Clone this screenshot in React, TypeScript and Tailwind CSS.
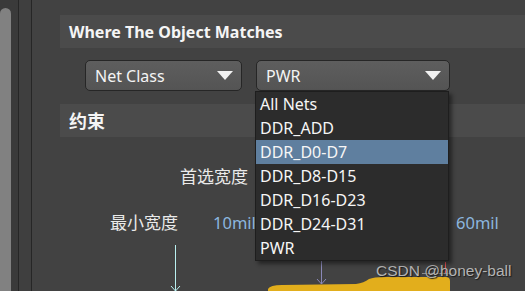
import React from 'react';

const NETS = ['All Nets', 'DDR_ADD', 'DDR_D0-D7', 'DDR_D8-D15', 'DDR_D16-D23', 'DDR_D24-D31', 'PWR'];

function Caret() {
    return (
        <svg width="16" height="9" viewBox="0 0 16 9" className="shrink-0">
            <path d="M0 0 H16 L8 9 Z" fill="#f2f2f2" />
        </svg>
    );
}

function Select({ value, className }: { value: string; className: string }) {
    return (
        <div
            className={`h-[31px] flex items-center justify-between pl-[9px] pr-[8px] rounded-[5px] border border-[#262626] bg-gradient-to-b from-[#5e5e5e] to-[#545454] text-[#f4f4f4] ${className}`}
        >
            <span>{value}</span>
            <Caret />
        </div>
    );
}

export default function App() {
    return (
        <div
            className="w-[525px] h-[291px] overflow-hidden flex bg-[#424242] text-[16px] leading-none"
            style={{ fontFamily: '"Noto Sans", "Noto Sans CJK SC", sans-serif' }}
        >
            {/* left gutters */}
            <div className="w-[11px] shrink-0 bg-[#3a3a3a] pt-[8px]">
                <div className="h-full bg-[#818181] rounded-t-[6px]" />
            </div>
            <div className="w-[8px] shrink-0 bg-[#3a3a3a] border-r border-[#262626]" />
            <div className="w-[13px] shrink-0 bg-[#3f3f3f] border-r border-[#262626]" />
            <div className="w-[28px] shrink-0" />

            <div className="flex-1 relative pt-[15px]">
                <div className="h-[33px] bg-[#4b4b4b] flex items-center pl-[9px] font-bold text-[#f5f5f5] text-[16px]">
                    Where The Object Matches
                </div>

                <div className="flex gap-[14px] pl-[25px] mt-[12px]">
                    <Select value="Net Class" className="w-[157px]" />
                    <Select value="PWR" className="w-[194px]" />
                </div>

                <div className="h-[33px] bg-[#4b4b4b] flex items-center pl-[9px] mt-[13px] text-[#f5f5f5] text-[18px] font-bold">
                    约束
                </div>

                {/* constraint diagram */}
                <div className="relative h-[154px] text-[17px] text-[#eaeaea]">
                    <div className="absolute left-[120px] top-[31px]">首选宽度</div>
                    <div className="absolute left-[50px] top-[77px]">最小宽度</div>
                    <div className="absolute left-[153px] top-[78px] text-[16.5px] text-[#8cb6df]">10mil</div>
                    <div className="absolute left-[396px] top-[78px] text-[16.5px] text-[#8cb6df]">60mil</div>

                    <svg className="absolute left-0 top-0" width="465" height="154" viewBox="0 0 465 154">
                        <line x1="115.5" y1="108" x2="115.5" y2="154" stroke="#b9f0f0" strokeWidth="1" />
                        <path d="M111 149 L115.5 154 L120 149" fill="none" stroke="#b9f0f0" strokeWidth="1" />
                        <line x1="261.5" y1="124" x2="261.5" y2="147" stroke="#8a88b8" strokeWidth="1" />
                        <path d="M257 142 L261.5 147 L266 142" fill="none" stroke="#8a88b8" strokeWidth="1" />
                        <line x1="385.5" y1="125" x2="385.5" y2="136" stroke="#e05050" strokeWidth="1" />
                        <line x1="362" y1="136.5" x2="392" y2="136.5" stroke="#8a8a8a" strokeWidth="1" />
                        <path d="M208 154 L208 152 Q210 148 222 148 L296 147 Q304 146 309 142 Q314 140 324 140 L386 140 Q390 140 390 144 L390 154 Z" fill="#e2ae1c" />
                    </svg>

                    <div
                        className="absolute left-[316px] top-[126px] text-[15.5px] text-[#b4b4b4] [text-shadow:1px_1px_1px_#1a1a1a]"
                        style={{ fontFamily: '"Liberation Sans", sans-serif' }}
                    >
                        CSDN @honey-ball
                    </div>
                </div>

                {/* open dropdown list */}
                <div className="absolute left-[195px] top-[91px] w-[194px] bg-[#2c2c2c] border border-[#1e1e1e] shadow-[3px_3px_4px_rgba(0,0,0,0.45)]">
                    {NETS.map((n) => (
                        <div
                            key={n}
                            className={`h-[24px] flex items-center pl-[4px] text-[16px] text-[#f6f6f6] ${n === 'DDR_D0-D7' ? 'bg-[#5f7f9f]' : ''}`}
                        >
                            {n}
                        </div>
                    ))}
                </div>
            </div>
        </div>
    );
}
